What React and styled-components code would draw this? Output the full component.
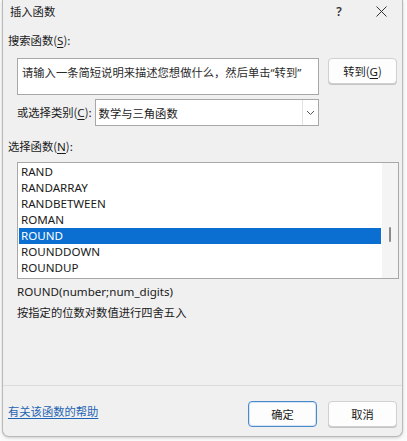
import React from 'react';
import styled, { createGlobalStyle } from 'styled-components';

const GlobalStyle = createGlobalStyle`
  html, body {
    margin: 0;
    padding: 0;
    background: #fafafa;
  }
  body {
    font-family: "Noto Sans", "Noto Sans CJK SC", sans-serif;
    font-size: 11.6px;
    color: #1a1a1a;
  }
`;

const cjk = `"Noto Sans CJK SC", sans-serif`;

const Page = styled.div`
  width: 407px;
  height: 441px;
  padding-left: 2px;
  box-sizing: border-box;
  overflow: hidden;
`;

const Dialog = styled.div`
  width: 401px;
  height: 437px;
  box-sizing: border-box;
  background: #f0f0f0;
  border: 1px solid #b9b9b9;
  border-top: none;
  border-radius: 0 0 7px 7px;
  box-shadow: 0 1px 3px rgba(0, 0, 0, 0.18);
  display: flex;
  flex-direction: column;
`;

const TitleBar = styled.div`
  height: 22px;
  display: flex;
  align-items: center;
  padding-left: 7px;
`;

const Title = styled.span`
  flex: 1;
  font-family: ${cjk};
  font-size: 11.3px;
  color: #1a1a1a;
`;

const TitleButton = styled.div`
  width: 42px;
  height: 22px;
  display: flex;
  align-items: center;
  justify-content: center;
  font-size: 12px;
  font-weight: 600;
  color: #333;
`;

const Body = styled.div`
  flex: 1;
  display: flex;
  flex-direction: column;
  padding: 0 5px;
`;

const Label = styled.div`
  font-family: ${cjk};
  font-size: 11.3px;
  line-height: 16px;
  margin-top: ${(p) => p.$top || 0}px;
  white-space: nowrap;
`;

const Key = styled.span`
  font-family: "Noto Sans", sans-serif;
  font-size: 11.6px;
  text-decoration: underline;
  text-underline-offset: 2px;
`;

const Latin = styled.span`
  font-family: "Noto Sans", sans-serif;
`;

const SearchRow = styled.div`
  display: flex;
  align-items: flex-start;
  margin-top: 9px;
  padding-left: 9px;
  gap: 9px;
`;

const SearchBox = styled.div`
  width: 302px;
  height: 37px;
  box-sizing: border-box;
  background: #fff;
  border: 1px solid #a8a8a8;
  padding: 6px 4px;
  font-family: ${cjk};
  font-size: 11.3px;
  line-height: 15px;
  color: #2b2b2b;
  white-space: nowrap;
  overflow: hidden;
`;

const Button = styled.button`
  width: 69px;
  height: 26px;
  box-sizing: border-box;
  background: #fdfdfd;
  border: 1px solid ${(p) => (p.$primary ? '#4a8ac8' : '#d0d0d0')};
  box-shadow: ${(p) => (p.$primary ? 'inset 0 0 0 1px #d4e4f4' : '0 1px 0 #c4c4c4')};
  border-radius: 4px;
  font-family: ${cjk};
  font-size: 11.3px;
  color: #1a1a1a;
  padding: 0;
  display: flex;
  align-items: center;
  justify-content: center;
`;

const CategoryRow = styled.div`
  display: flex;
  align-items: center;
  margin-top: 4px;
  padding-left: 9px;
`;

const Select = styled.div`
  width: 224px;
  height: 27px;
  box-sizing: border-box;
  margin-left: 3px;
  background: #fff;
  border: 1px solid #a8a8a8;
  display: flex;
  align-items: stretch;
`;

const SelectValue = styled.div`
  flex: 1;
  display: flex;
  align-items: center;
  padding-left: 3px;
  font-family: ${cjk};
  font-size: 11.3px;
`;

const SelectArrow = styled.div`
  width: 15px;
  border-left: 1px solid #e2e2e2;
  display: flex;
  align-items: center;
  justify-content: center;
`;

const ListBox = styled.div`
  margin: 7px 0 0 9px;
  width: 382px;
  height: 117px;
  box-sizing: border-box;
  background: #fff;
  border: 1px solid #a8a8a8;
  display: flex;
  overflow: hidden;
`;

const Items = styled.div`
  flex: 1;
  padding: 1px 0 0 1px;
`;

const Item = styled.div`
  height: 16px;
  line-height: 16px;
  padding-left: 2px;
  color: ${(p) => (p.$selected ? '#fff' : '#1a1a1a')};
  background: ${(p) => (p.$selected ? '#0a6fd0' : 'transparent')};
  margin-right: ${(p) => (p.$selected ? 1 : 0)}px;
`;

const Scroll = styled.div`
  width: 16px;
  background: #f4f4f4;
  display: flex;
  justify-content: center;
  padding-top: 64px;
  box-sizing: border-box;
`;

const Thumb = styled.div`
  width: 2px;
  height: 15px;
  border-radius: 1px;
  background: #8a8a8a;
`;

const Info = styled.div`
  padding-left: 9px;
  margin-top: 5px;
  display: flex;
  flex-direction: column;
  gap: 4px;
  line-height: 16px;
`;

const Desc = styled.div`
  font-family: ${cjk};
  font-size: 11.3px;
`;

const Separator = styled.div`
  margin: auto -5px 0;
  height: 1px;
  background: #dcdcdc;
`;

const Footer = styled.div`
  height: 50px;
  box-sizing: border-box;
  padding-top: 15px;
  display: flex;
  align-items: flex-start;
  gap: 11px;
`;

const HelpLink = styled.a`
  flex: 1;
  margin-top: 2px;
  line-height: 16px;
  font-family: ${cjk};
  font-size: 11.3px;
  color: #1f64b4;
  text-decoration: underline;
  text-underline-offset: 2px;
`;

const functions = ['RAND', 'RANDARRAY', 'RANDBETWEEN', 'ROMAN', 'ROUND', 'ROUNDDOWN', 'ROUNDUP'];

const App = () => {
  return (
    <Page>
      <GlobalStyle />
      <Dialog>
        <TitleBar>
          <Title>插入函数</Title>
          <TitleButton>?</TitleButton>
          <TitleButton>
            <svg width="11" height="11" viewBox="0 0 11 11">
              <path d="M0.5 0.5L10.5 10.5M10.5 0.5L0.5 10.5" stroke="#333" strokeWidth="1" />
            </svg>
          </TitleButton>
        </TitleBar>
        <Body>
          <Label $top={10}>
            搜索函数(<Key>S</Key>):
          </Label>
          <SearchRow>
            <SearchBox>
              请输入一条简短说明来描述您想做什么，然后单击<Latin>“</Latin>转到<Latin>”</Latin>
            </SearchBox>
            <Button>
              转到(<Key>G</Key>)
            </Button>
          </SearchRow>
          <CategoryRow>
            <Label>
              或选择类别(<Key>C</Key>):
            </Label>
            <Select>
              <SelectValue>数学与三角函数</SelectValue>
              <SelectArrow>
                <svg width="9" height="6" viewBox="0 0 9 6">
                  <path d="M1 1L4.5 4.5L8 1" fill="none" stroke="#555" strokeWidth="1" />
                </svg>
              </SelectArrow>
            </Select>
          </CategoryRow>
          <Label $top={12}>
            选择函数(<Key>N</Key>):
          </Label>
          <ListBox>
            <Items>
              {functions.map((f) => (
                <Item key={f} $selected={f === 'ROUND'}>
                  {f}
                </Item>
              ))}
            </Items>
            <Scroll>
              <Thumb />
            </Scroll>
          </ListBox>
          <Info>
            <div>ROUND(number;num_digits)</div>
            <Desc>按指定的位数对数值进行四舍五入</Desc>
          </Info>
          <Separator />
          <Footer>
            <HelpLink>有关该函数的帮助</HelpLink>
            <Button $primary>确定</Button>
            <Button>取消</Button>
          </Footer>
        </Body>
      </Dialog>
    </Page>
  );
};

export default App;
